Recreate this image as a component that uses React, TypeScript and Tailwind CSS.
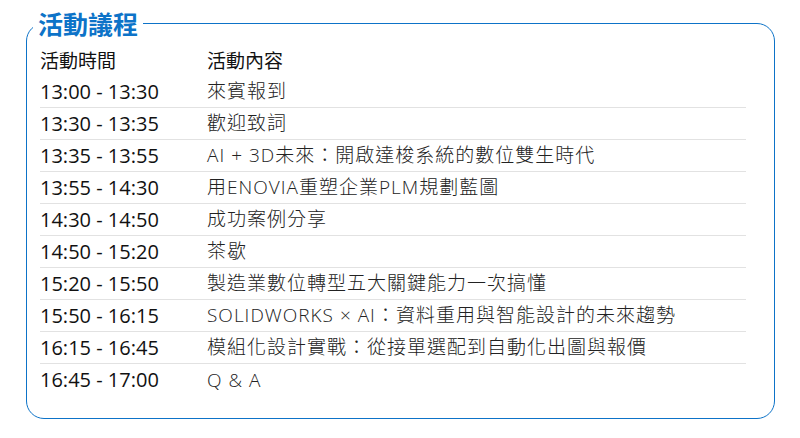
import React from 'react'

const agenda: { time: string; title: string }[] = [
  { time: '13:00 - 13:30', title: '來賓報到' },
  { time: '13:30 - 13:35', title: '歡迎致詞' },
  { time: '13:35 - 13:55', title: 'AI + 3D未來：開啟達梭系統的數位雙生時代' },
  { time: '13:55 - 14:30', title: '用ENOVIA重塑企業PLM規劃藍圖' },
  { time: '14:30 - 14:50', title: '成功案例分享' },
  { time: '14:50 - 15:20', title: '茶歇' },
  { time: '15:20 - 15:50', title: '製造業數位轉型五大關鍵能力一次搞懂' },
  { time: '15:50 - 16:15', title: 'SOLIDWORKS × AI：資料重用與智能設計的未來趨勢' },
  { time: '16:15 - 16:45', title: '模組化設計實戰：從接單選配到自動化出圖與報價' },
  { time: '16:45 - 17:00', title: 'Q & A' },
]

export default function App() {
  return (
    <div className="h-[438px] w-[800px] bg-white pt-[10px] font-['Open_Sans','Noto_Sans_CJK_TC',sans-serif]">
      <fieldset className="ml-[26px] w-[749px] rounded-[18px] border-[1.5px] border-[#0d73c8] pb-[22px] pl-[6px] pr-[28px]">
        <legend className="px-[5px] text-[25px] font-bold leading-[26px] text-[#0d73c8] font-['Noto_Sans_CJK_TC',sans-serif]">
          活動議程
        </legend>
        <div className="pl-[7px] pt-[8px]">
          <div className="flex h-[32px] items-center text-[19px] text-[#111] font-['Noto_Sans_CJK_TC',sans-serif]">
            <span className="w-[167px]">活動時間</span>
            <span>活動內容</span>
          </div>
          {agenda.map((row, i) => (
            <div
              key={row.time}
              className={`flex h-[32px] items-center ${i < agenda.length - 1 ? 'border-b border-[#e2e2e2]' : ''}`}
            >
              <span className="w-[167px] text-[20px] text-[#111]">{row.time}</span>
              <span className="text-[19px] font-light tracking-[1px] text-[#222]">{row.title}</span>
            </div>
          ))}
        </div>
      </fieldset>
    </div>
  )
}
